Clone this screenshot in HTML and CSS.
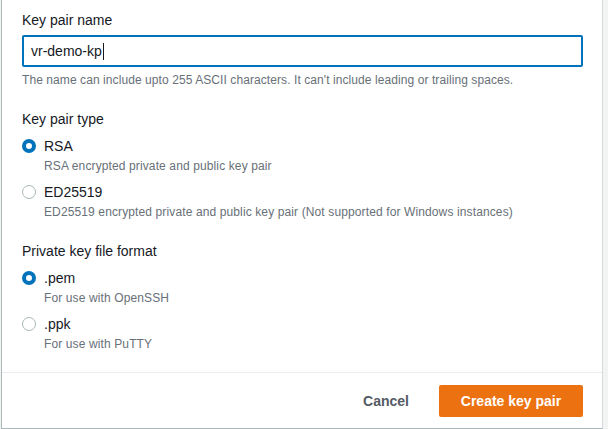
FILE: index.html
```html
<!DOCTYPE html>
<html lang="en">
<head>
  <meta charset="UTF-8" />
  <meta name="viewport" content="width=device-width, initial-scale=1.0" />
  <title>Create key pair</title>
  <link rel="stylesheet" href="styles.css">
</head>
<body>
  <div class="panel">
    <form class="form">
      <div class="field">
        <label class="field-label" for="kpName">Key pair name</label>
        <div class="text-input" id="kpName">vr-demo-kp<span class="caret"></span></div>
        <div class="hint">The name can include upto 255 ASCII characters. It can't include leading or trailing spaces.</div>
      </div>

      <div class="field">
        <div class="field-label">Key pair type</div>
        <div class="option">
          <span class="radio checked"></span>
          <div>
            <div class="option-label">RSA</div>
            <div class="option-desc">RSA encrypted private and public key pair</div>
          </div>
        </div>
        <div class="option">
          <span class="radio"></span>
          <div>
            <div class="option-label">ED25519</div>
            <div class="option-desc">ED25519 encrypted private and public key pair (Not supported for Windows instances)</div>
          </div>
        </div>
      </div>

      <div class="field">
        <div class="field-label">Private key file format</div>
        <div class="option">
          <span class="radio checked"></span>
          <div>
            <div class="option-label">.pem</div>
            <div class="option-desc">For use with OpenSSH</div>
          </div>
        </div>
        <div class="option">
          <span class="radio"></span>
          <div>
            <div class="option-label">.ppk</div>
            <div class="option-desc">For use with PuTTY</div>
          </div>
        </div>
      </div>
    </form>

    <div class="footer">
      <button class="btn btn-link" type="button">Cancel</button>
      <button class="btn btn-primary" type="button">Create key pair</button>
    </div>
  </div>
</body>
</html>
```

FILE: styles.css
```css
body { margin: 0; background: #f2f3f3; font-family: "Liberation Sans", Arial, sans-serif; color: #16191f; }
.panel { margin-left: 1px; width: 600px; height: 428px; background: #fff; border-left: 1px solid #aab7b8; border-right: 1px solid #d5dbdb; border-bottom: 1px solid #aab7b8; display: flex; flex-direction: column; }
.form { flex: 1; padding: 9px 19px 0 20px; }
.field { margin-bottom: 20px; }
.field-label { display: block; font-size: 14px; line-height: 22px; }
.text-input { margin-top: 4px; height: 28px; border: 2px solid #0073bb; border-radius: 2px; padding: 0 7px; font-size: 14px; line-height: 28px; display: flex; align-items: center; }
.caret { display: inline-block; width: 1px; height: 17px; background: #16191f; margin-left: 1px; }
.hint { margin-top: 5px; font-size: 12px; line-height: 16px; color: #687078; letter-spacing: 0.08px; }
.field + .field .field-label { margin-top: 1px; }
.option { display: flex; gap: 8px; margin-top: 6px; }
.option + .option { margin-top: 8px; }
.radio { flex: none; width: 14px; height: 14px; margin-top: 3px; box-sizing: border-box; border: 1px solid #aab7b8; border-radius: 50%; background: #fff; }
.radio.checked { border: 4px solid #0073bb; }
.option-label { font-size: 14px; line-height: 20px; }
.option-desc { margin-top: 2px; font-size: 12px; line-height: 16px; color: #687078; letter-spacing: 0.12px; }
.footer { height: 56px; border-top: 1px solid #eaeded; display: flex; align-items: center; justify-content: flex-end; gap: 10px; padding-right: 19px; }
.btn { font-family: inherit; font-size: 14px; font-weight: bold; height: 32px; border-radius: 2px; border: none; cursor: pointer; }
.btn-link { background: none; color: #545b64; padding: 0 20px; }
.btn-primary { background: #ec7211; color: #fff; width: 144px; padding: 0 20px; }
```
